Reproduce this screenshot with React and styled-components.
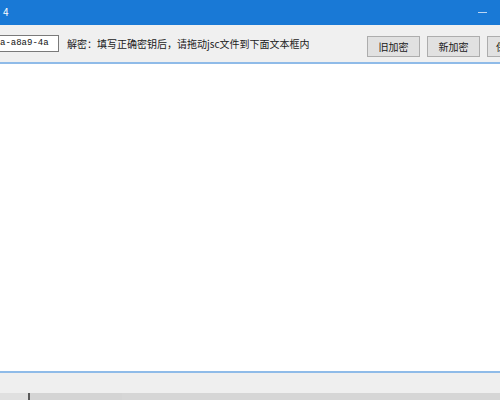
import styled, { createGlobalStyle } from "styled-components";

const GlobalStyle = createGlobalStyle`
    html, body {
        margin: 0;
        padding: 0;
        width: 500px;
        height: 400px;
        overflow: hidden;
        background: #f0f0f0;
    }
    body {
        font-family: "Noto Sans CJK SC", "Liberation Sans", sans-serif;
    }
`;

const Window = styled.div`
    display: flex;
    flex-direction: column;
    width: 500px;
    height: 400px;
    overflow: hidden;
`;

const TitleBar = styled.div`
    display: flex;
    align-items: center;
    justify-content: space-between;
    height: 25px;
    flex-shrink: 0;
    background: #1979d6;
    color: #fff;
    padding: 0 13px 0 3px;
    box-sizing: border-box;
`;

const Title = styled.span`
    font-size: 10px;
    line-height: 10px;
    margin-top: -1px;
`;

const MinimizeIcon = styled.span`
    display: block;
    width: 9px;
    height: 1px;
    background: #bcd6f3;
    margin-bottom: 1px;
`;

const Toolbar = styled.div`
    display: flex;
    align-items: flex-start;
    height: 37px;
    flex-shrink: 0;
    padding-top: 10px;
    box-sizing: border-box;
    background: #f0f0f0;
    overflow: hidden;
`;

const KeyInput = styled.div`
    flex-shrink: 0;
    width: 62px;
    height: 17px;
    margin-left: -3px;
    box-sizing: border-box;
    border: 1px solid #7a7a7a;
    background: #fff;
    font-family: "Liberation Mono", monospace;
    font-size: 9px;
    line-height: 15px;
    padding-left: 2px;
    color: #111;
    white-space: nowrap;
    overflow: hidden;
`;

const Hint = styled.span`
    margin-left: 8px;
    font-size: 10px;
    line-height: 17px;
    color: #1a1a1a;
    white-space: nowrap;
`;

const ButtonGroup = styled.div`
    display: flex;
    gap: 7px;
    margin-left: auto;
    margin-right: -40px;
    padding-top: 1px;
`;

const ToolButton = styled.button`
    flex-shrink: 0;
    width: 53px;
    height: 21px;
    padding: ${(p) => (p.$lead ? "0 0 0 8px" : "0")};
    text-align: ${(p) => (p.$lead ? "left" : "center")};
    border: 1px solid #adadad;
    background: #e1e1e1;
    font-family: "Noto Sans CJK SC", sans-serif;
    font-size: 10px;
    color: #1a1a1a;
`;

const Divider = styled.div`
    height: 2px;
    flex-shrink: 0;
    background: #8fbbe8;
`;

const TextArea = styled.div`
    flex: 1;
    background: #fff;
`;

const StatusBar = styled.div`
    height: 20px;
    flex-shrink: 0;
    background: #efefef;
`;

const BackStrip = styled.div`
    display: flex;
    height: 7px;
    flex-shrink: 0;
    background: #d6d6d6;
`;

const StripSegment = styled.div`
    width: ${(p) => p.$w}px;
    background: ${(p) => p.$bg};
`;

export default function App() {
    return (
        <>
            <GlobalStyle />
            <Window>
                <TitleBar>
                    <Title>4</Title>
                    <MinimizeIcon />
                </TitleBar>
                <Toolbar>
                    <KeyInput>a-a8a9-4a</KeyInput>
                    <Hint>解密：填写正确密钥后，请拖动jsc文件到下面文本框内</Hint>
                    <ButtonGroup>
                        <ToolButton>旧加密</ToolButton>
                        <ToolButton>新加密</ToolButton>
                        <ToolButton $lead>保存</ToolButton>
                    </ButtonGroup>
                </Toolbar>
                <Divider />
                <TextArea />
                <Divider />
                <StatusBar />
                <BackStrip>
                    <StripSegment $w={28} $bg="#e0e0e0" />
                    <StripSegment $w={2} $bg="#5a5a5a" />
                    <StripSegment $w={92} $bg="#d4d4d4" />
                </BackStrip>
            </Window>
        </>
    );
}
